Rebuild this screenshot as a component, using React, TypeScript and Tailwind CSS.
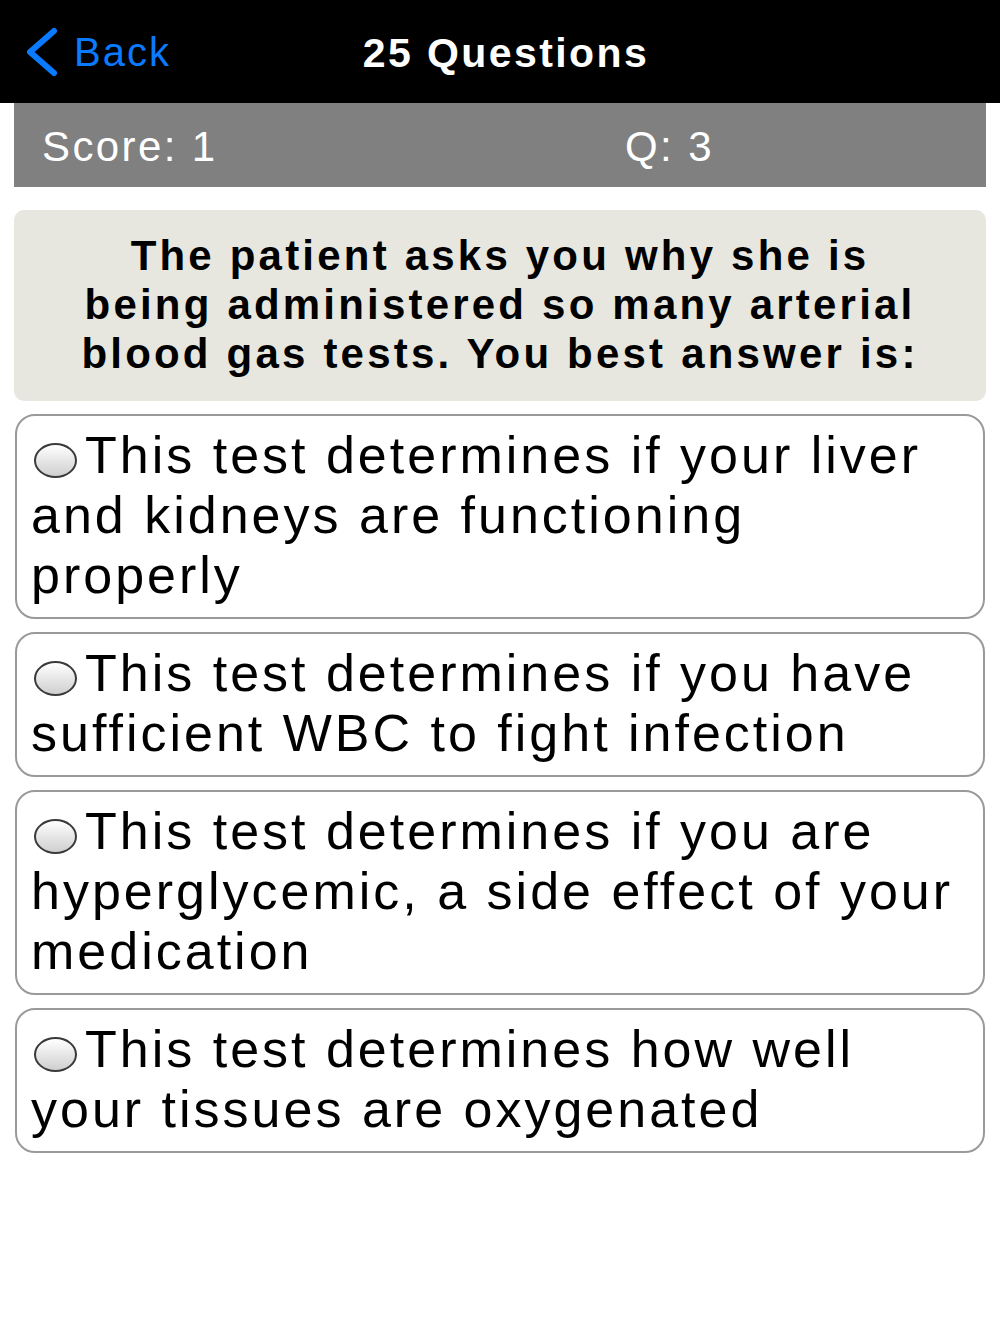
import React from 'react';

const options = [
  'This test determines if your liver and kidneys are functioning properly',
  'This test determines if you have sufficient WBC to fight infection',
  'This test determines if you are hyperglycemic, a side effect of your medication',
  'This test determines how well your tissues are oxygenated',
];

const Radio: React.FC = () => (
  <span className="inline-block w-[43px] h-[35px] ml-[3px] mr-[8px] align-[-5px] rounded-[50%] border-2 border-[#3a3a3a] bg-gradient-to-b from-white to-[#cfcfcf]" />
);

const App: React.FC = () => {
  return (
    <div className="min-h-[1334px] bg-white font-['Liberation_Sans',Arial,sans-serif]">
      {/* nav bar */}
      <div className="h-[103px] bg-black grid grid-cols-[1fr_auto_1fr] items-center">
        <button className="flex items-center pl-[24px] text-[#0a7aff] text-[40px] tracking-[2px] leading-none">
          <svg width="36" height="50" viewBox="0 0 36 50" className="mr-[14px] mt-[1px]">
            <polyline
              points="30,4 6,25 30,46"
              fill="none"
              stroke="#0a7aff"
              strokeWidth="6"
              strokeLinecap="round"
              strokeLinejoin="round"
            />
          </svg>
          Back
        </button>
        <div className="text-white text-[41px] font-bold tracking-[2.4px] leading-none pl-[12px] pt-[4px]">
          25 Questions
        </div>
        <div />
      </div>

      <div className="px-[14px]">
        {/* score bar */}
        <div className="h-[84px] bg-[#808080] flex items-center pl-[28px] text-white text-[42px] tracking-[2.4px] pt-[2px]">
          <span className="w-[583px]">Score: 1</span>
          <span>Q: 3</span>
        </div>

        {/* question */}
        <div className="mt-[23px] bg-[#e7e7df] rounded-[10px] pt-[21px] pb-[23px] px-[64px] text-center text-black font-bold text-[42px] leading-[49px] tracking-[3.2px]">
          The patient asks you why she is being administered so many arterial blood gas tests. You best answer is:
        </div>

        {/* answers */}
        <div className="mt-[13px] flex flex-col gap-[13px]">
          {options.map((o) => (
            <div
              key={o}
              className="mx-px border-2 border-[#9a9a9a] rounded-[20px] pt-[9px] pb-[12px] pl-[14px] pr-[20px] text-black text-[52px] leading-[60px] tracking-[3px]"
            >
              <Radio />
              {o}
            </div>
          ))}
        </div>
      </div>
    </div>
  );
};

export default App;
